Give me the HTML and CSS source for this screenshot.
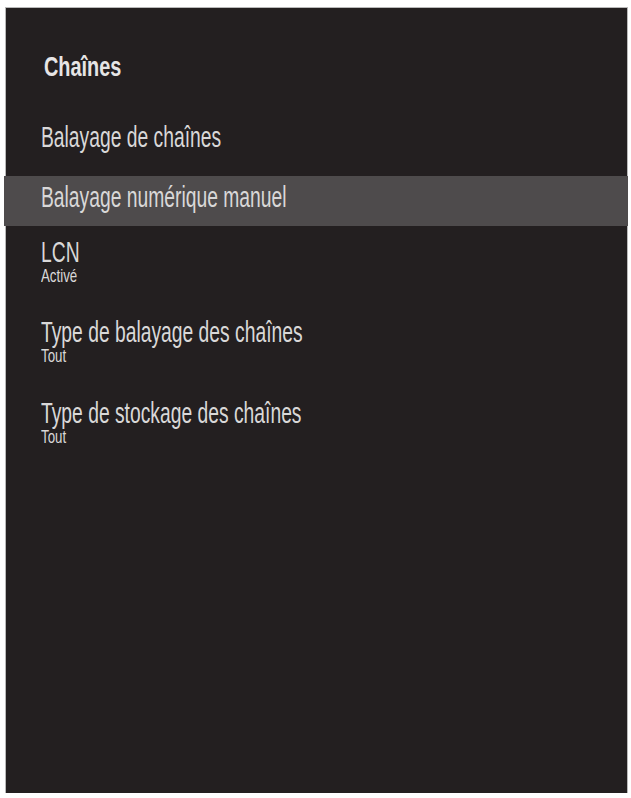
FILE: index.html
```html
<!DOCTYPE html>
<html lang="fr">
<head>
<meta charset="utf-8">
<title>Chaînes</title>
<link rel="stylesheet" href="styles.css">
</head>
<body>
<div class="panel">
  <div class="title"><span class="txt">Chaînes</span></div>
  <div class="item first"><div class="label"><span class="txt">Balayage de chaînes</span></div></div>
  <div class="item selected"><div class="label"><span class="txt">Balayage numérique manuel</span></div></div>
  <div class="item lcn">
    <div class="label"><span class="txt">LCN</span></div>
    <div class="sub"><span class="txt">Activé</span></div>
  </div>
  <div class="item gap">
    <div class="label"><span class="txt">Type de balayage des chaînes</span></div>
    <div class="sub"><span class="txt">Tout</span></div>
  </div>
  <div class="item gap">
    <div class="label"><span class="txt">Type de stockage des chaînes</span></div>
    <div class="sub"><span class="txt">Tout</span></div>
  </div>
</div>
</body>
</html>
```
FILE: styles.css
```css
html, body {
  margin: 0;
  padding: 0;
  background: #ffffff;
}

body {
  font-family: "Liberation Sans", Arial, sans-serif;
}

.panel {
  box-sizing: border-box;
  margin: 8px 0 0 6px;
  width: 621px;
  height: 785px;
  background: #231f20;
  box-shadow: 0 0 0 1px #b9b9b9;
  padding-top: 45px;
  color: #d9d8d8;
}

.txt {
  display: inline-block;
  white-space: nowrap;
  transform-origin: 0 50%;
  transform: scaleX(0.665);
}

.title {
  padding-left: 38px;
  font-size: 28px;
  line-height: 28px;
  font-weight: bold;
  color: #e6e5e5;
}

.title .txt {
  transform: scaleX(0.71);
}

.item {
  padding-left: 35px;
}

.label {
  font-size: 29px;
  line-height: 29px;
}

.sub {
  font-size: 19px;
  line-height: 18px;
}

.sub .txt {
  transform: scaleX(0.7);
}

.first {
  margin-top: 42px;
}

.selected {
  margin-top: 24px;
  margin-left: -2px;
  margin-right: -1px;
  padding-left: 37px;
  background: #4e4b4c;
  height: 50px;
  box-sizing: border-box;
}

.selected .label {
  line-height: 42px;
}

.lcn {
  margin-top: 11.5px;
}

.gap {
  margin-top: 33.5px;
}
```
